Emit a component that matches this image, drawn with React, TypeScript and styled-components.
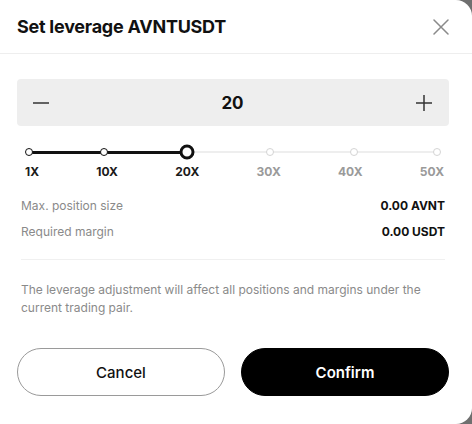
import React from "react";
import styled, { createGlobalStyle } from "styled-components";

const Global = createGlobalStyle`
  html, body { margin: 0; padding: 0; background: #6f6f6f; }
  body { font-family: Inter, "Noto Sans", Arial, sans-serif; -webkit-font-smoothing: antialiased; }
  * { box-sizing: border-box; }
`;

const Modal = styled.div`
  width: 472px;
  height: 424px;
  background: #fff;
  border-radius: 0 16px 16px 0;
  display: flex;
  flex-direction: column;
  overflow: hidden;
`;

const Header = styled.div`
  height: 54px;
  padding: 0 23px 0 17px;
  display: flex;
  align-items: center;
  justify-content: space-between;
  border-bottom: 1px solid #eeeeee;
`;

const Title = styled.h1`
  margin: 0;
  font-size: 18px;
  font-weight: 700;
  color: #111;
  letter-spacing: -0.25px;
`;

const IconButton = styled.button<{ $color?: string }>`
  border: 0;
  background: none;
  padding: 0;
  display: flex;
  align-items: center;
  justify-content: center;
  cursor: pointer;
  color: ${(p) => p.$color || "#333"};
`;

const Body = styled.div`
  padding: 0 23px 0 17px;
  display: flex;
  flex-direction: column;
`;

const Stepper = styled.div`
  margin-top: 25px;
  height: 47px;
  background: #eeeeee;
  border-radius: 4px;
  display: flex;
  align-items: center;
  justify-content: space-between;
  padding: 0 17px 0 16px;
`;

const StepValue = styled.div`
  font-size: 17px;
  font-weight: 700;
  color: #111;
`;

const SliderWrap = styled.div`
  margin: 18px 12px 0;
  height: 16px;
  position: relative;
`;

const Track = styled.div`
  position: absolute;
  left: 0;
  right: 0;
  top: 7px;
  height: 2px;
  background: #eeeeee;
`;

const ActiveTrack = styled.div`
  position: absolute;
  left: 0;
  top: 6.5px;
  height: 3px;
  background: #111;
`;

const Dot = styled.div<{ $active: boolean; $current: boolean }>`
  position: absolute;
  top: 8px;
  transform: translate(-50%, -50%);
  width: ${(p) => (p.$current ? 15 : 8)}px;
  height: ${(p) => (p.$current ? 15 : 8)}px;
  border-radius: 50%;
  background: #fff;
  border: ${(p) => (p.$current ? 3.5 : 1.8)}px solid ${(p) => (p.$active ? "#111" : "#d4d4d4")};
`;

const Labels = styled.div`
  margin: 4px 5px 0 8px;
  display: flex;
  justify-content: space-between;
`;

const Label = styled.span<{ $active: boolean }>`
  font-size: 12px;
  line-height: 16px;
  font-weight: 700;
  color: ${(p) => (p.$active ? "#1a1a1a" : "#9a9a9a")};
`;

const Info = styled.div`
  margin-top: 12px;
  padding: 0 4px;
  display: flex;
  flex-direction: column;
`;

const InfoRow = styled.div`
  height: 26px;
  display: flex;
  align-items: center;
  justify-content: space-between;
  font-size: 12px;
`;

const InfoLabel = styled.span`
  color: #8a8a8a;
`;

const InfoValue = styled.span`
  color: #111;
  font-weight: 700;
`;

const Divider = styled.div`
  margin: 15px 4px 0;
  height: 1px;
  background: #f0f0f0;
`;

const Note = styled.p`
  margin: 21px 4px 0;
  font-size: 12px;
  line-height: 18px;
  color: #8a8a8a;
`;

const Buttons = styled.div`
  margin-top: 31px;
  display: grid;
  grid-template-columns: 1fr 1fr;
  gap: 16px;
`;

const Btn = styled.button<{ $primary?: boolean }>`
  height: 48px;
  border-radius: 24px;
  font-family: inherit;
  font-size: 15px;
  font-weight: ${(p) => (p.$primary ? 600 : 500)};
  background: ${(p) => (p.$primary ? "#000" : "#fff")};
  color: ${(p) => (p.$primary ? "#fff" : "#111")};
  border: 1px solid ${(p) => (p.$primary ? "#000" : "#9a9a9a")};
  cursor: pointer;
`;

const marks = [1, 10, 20, 30, 40, 50];
const value = 20;
const pct = (v: number) => ((v - 1) / 49) * 100;

export default function App() {
  return (
    <>
      <Global />
      <Modal>
        <Header>
          <Title>Set leverage AVNTUSDT</Title>
          <IconButton $color="#8a8a8a" aria-label="close">
            <svg width="16" height="16" viewBox="0 0 16 16" fill="none" stroke="currentColor" strokeWidth="1.5" strokeLinecap="round">
              <path d="M1 1L15 15M15 1L1 15" />
            </svg>
          </IconButton>
        </Header>
        <Body>
          <Stepper>
            <IconButton aria-label="decrease">
              <svg width="16" height="16" viewBox="0 0 16 16" fill="none" stroke="currentColor" strokeWidth="1.5">
                <path d="M0 8H16" />
              </svg>
            </IconButton>
            <StepValue>{value}</StepValue>
            <IconButton aria-label="increase">
              <svg width="16" height="16" viewBox="0 0 16 16" fill="none" stroke="currentColor" strokeWidth="1.5">
                <path d="M0 8H16M8 0V16" />
              </svg>
            </IconButton>
          </Stepper>
          <SliderWrap>
            <Track />
            <ActiveTrack style={{ width: `${pct(value)}%` }} />
            {marks.map((m) => (
              <Dot key={m} $active={m <= value} $current={m === value} style={{ left: `${pct(m)}%` }} />
            ))}
          </SliderWrap>
          <Labels>
            {marks.map((m) => (
              <Label key={m} $active={m <= value}>{m}X</Label>
            ))}
          </Labels>
          <Info>
            <InfoRow>
              <InfoLabel>Max. position size</InfoLabel>
              <InfoValue>0.00 AVNT</InfoValue>
            </InfoRow>
            <InfoRow>
              <InfoLabel>Required margin</InfoLabel>
              <InfoValue>0.00 USDT</InfoValue>
            </InfoRow>
          </Info>
          <Divider />
          <Note>The leverage adjustment will affect all positions and margins under the current trading pair.</Note>
          <Buttons>
            <Btn>Cancel</Btn>
            <Btn $primary>Confirm</Btn>
          </Buttons>
        </Body>
      </Modal>
    </>
  );
}
